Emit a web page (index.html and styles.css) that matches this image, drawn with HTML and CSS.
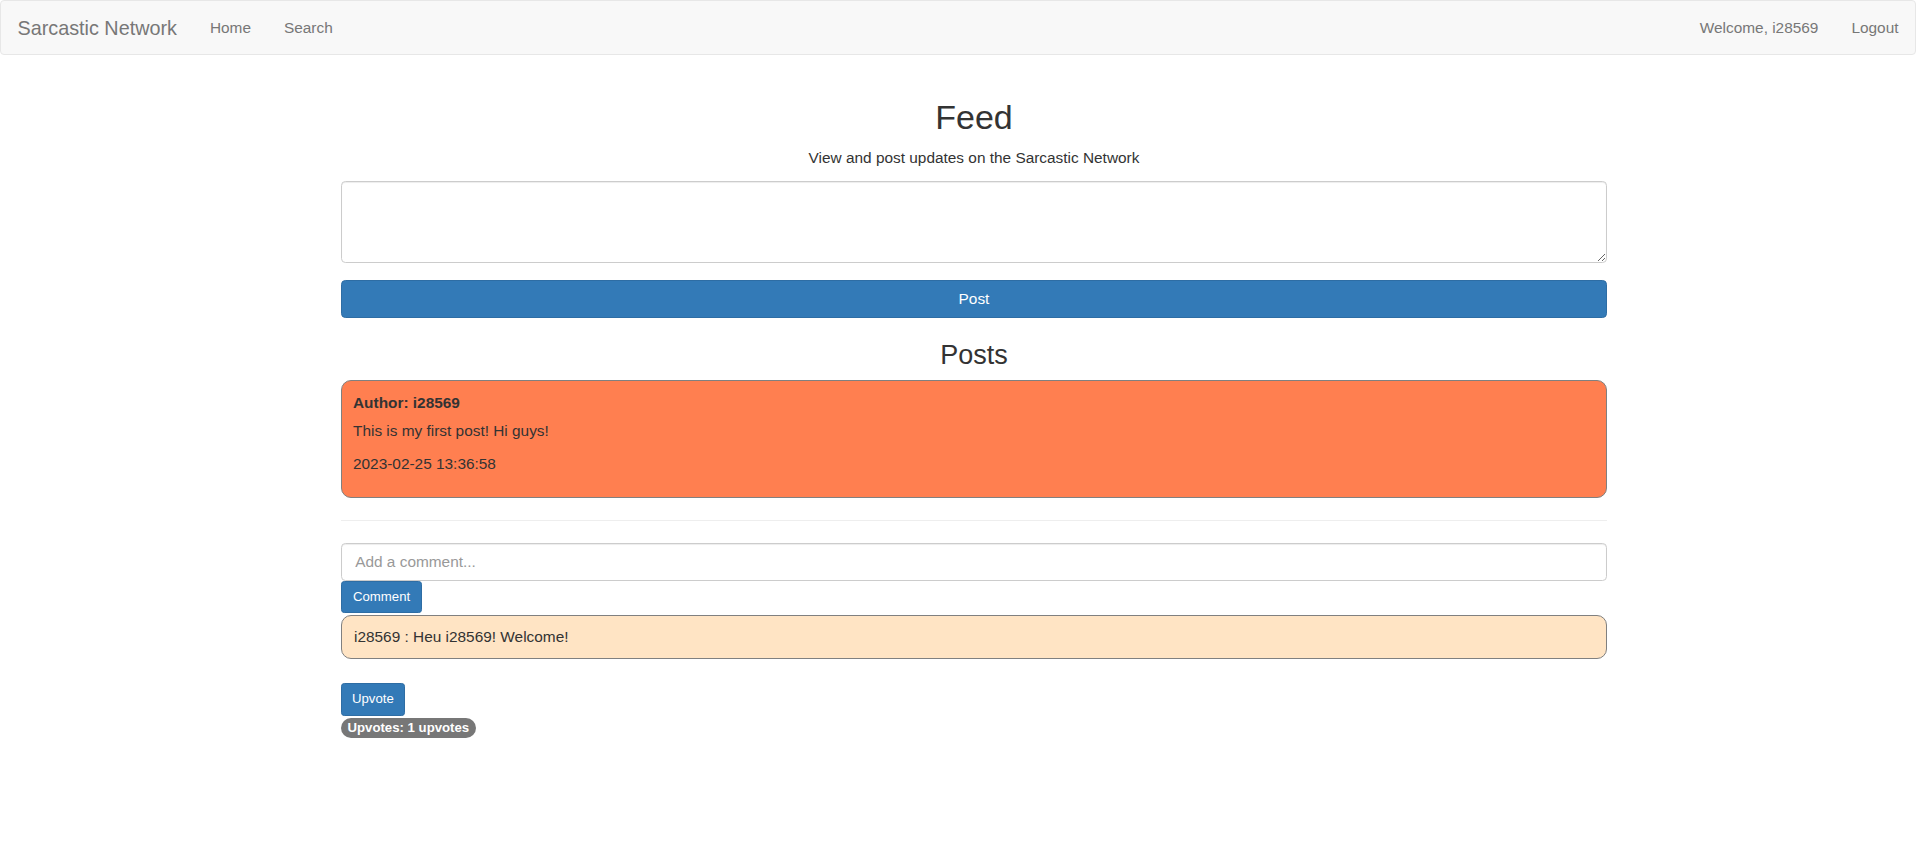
FILE: index.html
```html
<!DOCTYPE html>
<html lang="en">
<head>
<meta charset="utf-8">
<title>Sarcastic Network - Feed</title>
<link rel="stylesheet" href="styles.css">
</head>
<body>
<nav class="navbar">
  <div class="nav-left">
    <a class="brand" href="#">Sarcastic Network</a>
    <a class="nav-link" href="#">Home</a>
    <a class="nav-link" href="#">Search</a>
  </div>
  <div class="nav-right">
    <a class="nav-link" href="#">Welcome, i28569</a>
    <a class="nav-link" href="#">Logout</a>
  </div>
</nav>

<main class="container">
  <h1 class="page-title">Feed</h1>
  <p class="subtitle">View and post updates on the Sarcastic Network</p>

  <form class="post-form">
    <textarea class="form-control post-input"></textarea>
    <button type="button" class="btn btn-primary btn-block">Post</button>
  </form>

  <h3 class="section-title">Posts</h3>

  <div class="post-card">
    <p class="post-author">Author: i28569</p>
    <p class="post-body">This is my first post! Hi guys!</p>
    <p class="post-date">2023-02-25 13:36:58</p>
  </div>

  <hr class="divider">

  <div class="comment-form">
    <input class="form-control comment-input" type="text" placeholder="Add a comment...">
    <button type="button" class="btn btn-primary btn-sm">Comment</button>
  </div>

  <div class="comment">i28569 : Heu i28569! Welcome!</div>

  <div class="vote">
    <button type="button" class="btn btn-primary btn-sm btn-vote">Upvote</button>
    <span class="badge">Upvotes: 1 upvotes</span>
  </div>
</main>
</body>
</html>
```

FILE: styles.css
```css
* {
  box-sizing: border-box;
}

html, body {
  margin: 0;
  padding: 0;
  background: #fff;
}

body {
  font-family: "Liberation Sans", Arial, Helvetica, sans-serif;
  font-size: 15.4px;
  line-height: 22px;
  color: #333;
}

a {
  text-decoration: none;
}

/* Navbar */
.navbar {
  display: flex;
  justify-content: space-between;
  align-items: center;
  height: 55px;
  width: 1916px;
  padding: 0 0 0 16.5px;
  margin-bottom: 22px;
  background: #f8f8f8;
  border: 1px solid #e7e7e7;
  border-radius: 4px;
}

.nav-left,
.nav-right {
  display: flex;
  align-items: center;
  height: 100%;
}

.brand {
  font-size: 19.8px;
  line-height: 22px;
  color: #777;
  padding-right: 16.5px;
}

.nav-link {
  font-size: 15.4px;
  line-height: 22px;
  color: #777;
  padding: 0 16.5px;
}

/* Main container */
.container {
  width: 1266px;
  margin-left: 341px;
  padding-top: 22px;
}

.page-title {
  font-size: 34px;
  font-weight: 500;
  line-height: 1.1;
  text-align: center;
  margin: 0 0 11px;
}

.subtitle {
  text-align: center;
  margin: 0 0 12px;
}

.post-form {
  margin: 0;
}

.form-control {
  display: block;
  width: 100%;
  font-family: inherit;
  font-size: 15.4px;
  line-height: 22px;
  color: #555;
  background: #fff;
  border: 1px solid #ccc;
  border-radius: 4.4px;
  box-shadow: inset 0 1px 1px rgba(0, 0, 0, 0.075);
  padding: 6.6px 13.2px;
}

.form-control::placeholder {
  color: #999;
}

.post-input {
  height: 82px;
  margin-bottom: 17px;
  resize: vertical;
}

.btn {
  display: inline-block;
  font-family: inherit;
  font-size: 15.4px;
  line-height: 22px;
  padding: 6.6px 13.2px;
  border: 1px solid transparent;
  border-radius: 4.4px;
  cursor: pointer;
  text-align: center;
}

.btn-primary {
  color: #fff;
  background: #337ab7;
  border-color: #2e6da4;
}

.btn-block {
  display: block;
  width: 100%;
}

.btn-sm {
  font-size: 13.2px;
  line-height: 19.8px;
  padding: 5.5px 11px;
  border-radius: 3.3px;
}

.btn-vote {
  padding: 5.5px 10px;
}

.section-title {
  font-size: 27px;
  font-weight: 500;
  line-height: 1.1;
  text-align: center;
  margin: 23px 0 10px;
}

/* Post card */
.post-card {
  background: #ff7f50;
  border: 1px solid #808080;
  border-radius: 10px;
  padding: 11px 11px;
}

.post-card p {
  margin: 0;
}

.post-author {
  font-weight: bold;
  margin-bottom: 6px !important;
}

.post-body {
  margin-bottom: 11px !important;
}

.post-date {
  margin-bottom: 11px !important;
}

.divider {
  border: 0;
  border-top: 1px solid #eee;
  margin: 22px 0;
}

/* Comments */
.comment-form {
  margin: 0;
}

.comment-input {
  height: 37.4px;
}

.comment {
  margin-top: 1.5px;
  margin-bottom: 24px;
  background: #ffe4c4;
  border: 1px solid #808080;
  border-radius: 10px;
  padding: 10px 12px;
  color: #333;
}

.vote {
  display: flex;
  flex-direction: column;
  align-items: flex-start;
  gap: 2px;
}

.badge {
  display: inline-block;
  font-size: 13.2px;
  font-weight: bold;
  line-height: 1;
  color: #fff;
  background: #777;
  padding: 3.3px 6.5px;
  border-radius: 11px;
  white-space: nowrap;
}
```
